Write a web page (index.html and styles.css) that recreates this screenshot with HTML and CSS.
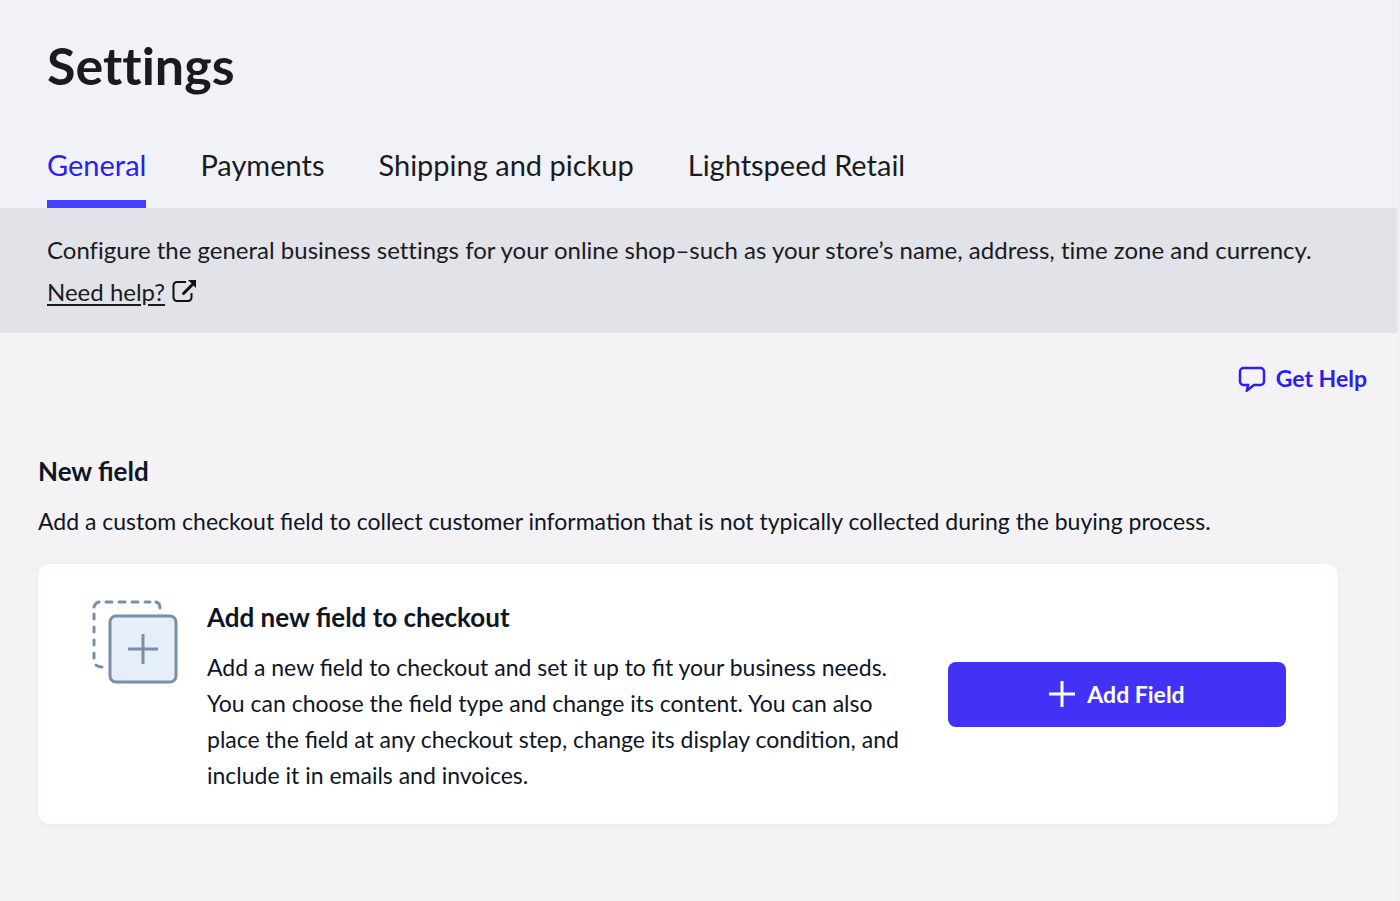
FILE: index.html
```html
<!DOCTYPE html>
<html lang="en">
<head>
    <meta charset="UTF-8">
    <meta name="viewport" content="width=device-width, initial-scale=1.0">
    <title>Settings</title>
    <link rel="stylesheet" href="styles.css">
</head>
<body>
    <header class="header">
        <h1>Settings</h1>
        <nav class="tabs">
            <a class="tab active" href="#general">General</a>
            <a class="tab" href="#payments">Payments</a>
            <a class="tab" href="#shipping">Shipping and pickup</a>
            <a class="tab" href="#retail">Lightspeed Retail</a>
        </nav>
    </header>
    <div class="info">
        <p>Configure the general business settings for your online shop–such as your store’s name, address, time zone and currency.</p>
        <p class="help">
            <a class="help-link" href="#help">Need help?</a>
            <svg width="26" height="26" viewBox="0 0 26 26" fill="none" stroke="#111">
                <path d="M14 3H5a3.500 3.500 0 0 0-3.500 3.500v12A3.500 3.500 0 0 0 5 22h11a3.500 3.500 0 0 0 3.500-3.500V14" stroke-width="2"/>
                <path d="M11.500 14.500L20 6" stroke-width="3" stroke-linecap="round"/>
                <path d="M16 1h8v8z" fill="#111" stroke="none"/>
            </svg>
        </p>
    </div>
    <main class="content">
        <a class="get-help" href="#chat">
            <svg width="28" height="28" viewBox="0 0 28 28" fill="none" stroke="#2a1ff0" stroke-width="2.500">
                <path d="M5.500 4h17A3.500 3.500 0 0 1 26 7.500v10a3.500 3.500 0 0 1-3.500 3.500H16l-7 5.500 1-5.500H5.500A3.500 3.500 0 0 1 2 17.500v-10A3.500 3.500 0 0 1 5.500 4z"/>
            </svg>
            Get Help
        </a>
        <section class="section">
            <h2>New field</h2>
            <p class="lead">Add a custom checkout field to collect customer information that is not typically collected during the buying process.</p>
            <div class="card">
                <svg class="card-icon" width="88" height="86" viewBox="0 0 88 86" fill="none" stroke="#788fac" stroke-width="3">
                    <g stroke-linecap="round">
                        <path d="M2 8Q3 4 7 3M64 3Q68 4 68 9M4 66Q6 68 10 68"/>
                        <path d="M14 3h6M27 3h6M40 3h6M53 3h5M2 15v5M2 28v5M2 41v5M2 54v5"/>
                    </g>
                    <rect x="18" y="17" width="66" height="66" rx="6" fill="#e6eff9"/>
                    <path d="M36 50h30M51 35v30"/>
                </svg>
                <div class="card-text">
                    <h3>Add new field to checkout</h3>
                    <p>Add a new field to checkout and set it up to fit your business needs. You can choose the field type and change its content. You can also place the field at any checkout step, change its display condition, and include it in emails and invoices.</p>
                </div>
                <button class="add-button" type="button">
                    <svg width="26" height="26" viewBox="0 0 26 26" stroke="#fff" stroke-width="3">
                        <path d="M0 13h26M13 0v26"/>
                    </svg>
                    Add Field
                </button>
            </div>
        </section>
    </main>
</body>
</html>
```
FILE: styles.css
```css
* {
    box-sizing: border-box;
}
body {
    margin: 0;
    min-height: 100vh;
    font-family: Lato, sans-serif;
    color: #1a1b1e;
    background: #f4f2f5;
    border-right: 3px solid #f0f0f3;
}
h1, h2, h3, p {
    margin: 0;
}
.header {
    padding: 32px 47px 0;
    background: #f1f2f8;
    font-variant-ligatures: none;
}
h1 {
    font-size: 52px;
    line-height: 66px;
}
.tabs {
    display: flex;
    gap: 54px;
    margin-top: 45px;
}
.tab {
    padding-bottom: 13px;
    border-bottom: 8px solid transparent;
    font-size: 29px;
    line-height: 44px;
    color: #1a1b1e;
    text-decoration: none;
}
.tab.active {
    color: #2a1ff0;
    border-color: #4340ff;
}
.info {
    padding: 21px 47px 20px;
    background: #e2e3e8;
    font-size: 24px;
    line-height: 42px;
    font-variant-ligatures: none;
}
.help {
    display: flex;
    align-items: center;
    gap: 7px;
}
.help-link {
    color: inherit;
    text-underline-offset: 3px;
}
.content {
    padding: 27px 59px 76px 38px;
}
.get-help {
    display: flex;
    align-items: center;
    gap: 10px;
    width: fit-content;
    margin: 0 -29px 0 auto;
    font-size: 23px;
    font-weight: 700;
    line-height: 36px;
    color: #2a1ff0;
    text-decoration: none;
}
.section {
    margin-top: 57px;
    color: #0d1626;
}
h2, h3 {
    font-size: 26px;
    line-height: 36px;
}
.lead {
    margin-top: 14px;
    font-size: 23px;
    line-height: 36px;
}
.card {
    display: flex;
    align-items: center;
    margin-top: 25px;
    padding: 35px 52px 31px 54px;
    background: #fff;
    border-radius: 12px;
    box-shadow: 0 1px 4px rgba(0, 0, 0, 0.06);
}
.card-icon {
    flex: none;
    align-self: flex-start;
}
.card-text {
    flex: 1;
    margin: 0 44px 0 27px;
}
.card-text p {
    margin-top: 14px;
    font-size: 23px;
    line-height: 36px;
}
.add-button {
    display: flex;
    flex: none;
    justify-content: center;
    align-items: center;
    gap: 12px;
    width: 338px;
    height: 65px;
    margin-bottom: 4px;
    border: none;
    border-radius: 8px;
    background: #4132f5;
    color: #fff;
    font: 700 23px Lato, sans-serif;
    cursor: pointer;
}
```
